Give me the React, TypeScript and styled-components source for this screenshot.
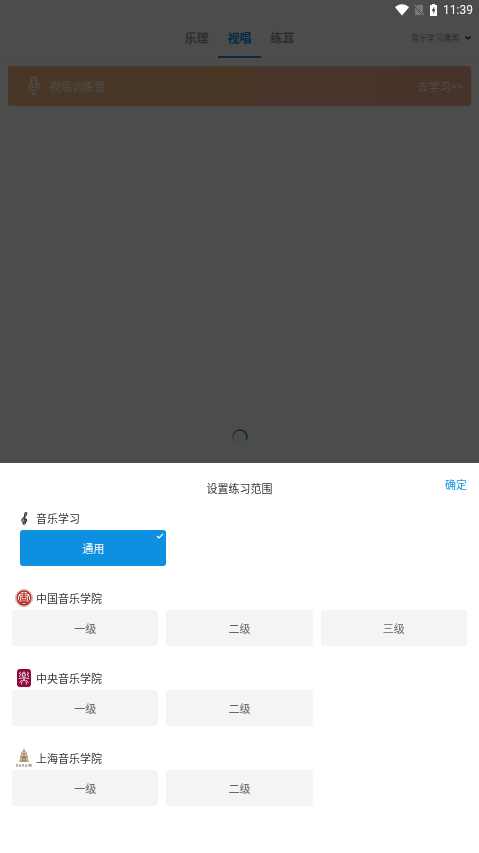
import React, { useState } from "react";
import styled, { createGlobalStyle } from "styled-components";

const GlobalStyle = createGlobalStyle`
  * { box-sizing: border-box; }
  body {
    margin: 0;
    background: #fff;
    font-family: "Noto Sans CJK SC", sans-serif;
    font-size: 11px;
    line-height: 18px;
  }
  button { font: inherit; border: 0; padding: 0; background: none; cursor: pointer; }
  h1, h2 { margin: 0; font: inherit; }
`;

const Page = styled.div`
  position: relative;
  min-height: 100vh;
`;

const TopBar = styled.header`
  display: grid;
  grid-template-columns: 1fr auto 1fr;
  height: 58px;
  padding-top: 20px;
  border-bottom: 1px solid #f2f2f2;
`;

const Tabs = styled.nav`
  grid-column: 2;
  display: flex;
`;

const Tab = styled.button<{ $active?: boolean }>`
  width: 43px;
  height: 38px;
  border-bottom: 2px solid ${(p) => (p.$active ? "#0d90e0" : "transparent")};
  color: ${(p) => (p.$active ? "#0d90e0" : "#999")};
  font-size: 12px;
  font-weight: 700;
`;

const ScopeButton = styled.button`
  justify-self: end;
  display: flex;
  align-items: center;
  gap: 5px;
  height: 36px;
  padding-right: 7px;
  color: #888;
  font-size: 8px;
`;

const Banner = styled.section`
  display: flex;
  align-items: center;
  height: 40px;
  margin: 8px;
  padding: 0 8px 0 20px;
  border-radius: 3px;
  background: linear-gradient(90deg, #f0b882, #f0b47e 50%, #f0b090 56%, #f0aa8c);
  color: #fff;
`;

const BannerTitle = styled.h2`
  flex: 1;
  margin-left: 10px;
`;

const BannerLink = styled.a`
  color: inherit;
  text-decoration: none;
`;

const Loading = styled.div`
  position: absolute;
  inset: 20px 0 0;
  display: flex;
  align-items: center;
  justify-content: center;
`;

const Overlay = styled.div`
  position: fixed;
  inset: 0;
  display: flex;
  flex-direction: column;
  justify-content: space-between;
  background: rgba(0, 0, 0, 0.7);
`;

const StatusBar = styled.div`
  display: flex;
  align-items: center;
  justify-content: flex-end;
  height: 20px;
  padding-right: 6px;
  color: #fff;
  font-family: Roboto, sans-serif;
  font-size: 12px;
`;

const StatusIcon = styled.svg`
  margin-right: 5px;
`;

const Sheet = styled.section`
  padding-bottom: 47px;
  background: #fff;
`;

const SheetHeader = styled.div`
  display: grid;
  grid-template-columns: 1fr auto 1fr;
  height: 43px;
  padding: 0 12px;
`;

const SheetTitle = styled.h1`
  grid-column: 2;
  padding-top: 16px;
  color: #333;
`;

const Confirm = styled.button`
  justify-self: end;
  align-self: start;
  padding-top: 12px;
  color: #1296e0;
`;

const Group = styled.section<{ $indent?: boolean }>`
  padding: ${(p) => (p.$indent ? "0 4px 0 20px" : "0 12px")};
  & + & { margin-top: 20px; }
`;

const GroupTitle = styled.h2<{ $indent?: boolean }>`
  display: flex;
  align-items: center;
  gap: 3px;
  height: 24px;
  margin-left: ${(p) => (p.$indent ? "-5px" : "3px")};
  color: #333;
`;

const Options = styled.div`
  display: grid;
  grid-template-columns: repeat(3, 1fr);
  gap: 8px;
`;

const Option = styled.button<{ $selected: boolean }>`
  position: relative;
  height: 36px;
  border-radius: 3px;
  background: ${(p) => (p.$selected ? "#0d90e0" : "#f4f4f4")};
  color: ${(p) => (p.$selected ? "#fff" : "#666")};
`;

const Check = styled.svg`
  position: absolute;
  top: 2px;
  right: 2px;
`;

const ClefIcon = () => (
  <svg width="18" height="18" viewBox="0 0 18 18" fill="none" stroke="#333" strokeLinecap="round">
    <path d="M10.3 14.2 9.6 6.2C9.4 3.2 12.2 2.6 11.7 5 11.3 7.4 7 8.6 6.8 11.2c-.1 2.5 4.8 2.6 4.8.2 0-2.2-3-1.9-2.8-.2" strokeWidth="1.2" />
    <path d="M10.3 14.2c0 1.4-1.5 1.5-2 .9" strokeWidth="1" />
    <circle cx="8.3" cy="14.3" r="1" fill="#333" stroke="none" />
  </svg>
);

const ChinaSeal = () => (
  <svg width="18" height="18" viewBox="0 0 18 18" fill="none" stroke="#b12a22">
    <circle cx="9" cy="9" r="8.5" stroke="#c9887f" strokeWidth=".7" />
    <circle cx="9" cy="9" r="6.9" strokeWidth="1.5" />
    <g strokeWidth="1">
      <path d="M5 4.8h8M5.2 6.7h7.6M6.3 8.4h5.4v2.4H6.3ZM9 3v8M4.5 7v4.5M13.5 7v4.5M3.2 12h11.6" />
      <path d="M5.2 14.2c2-1 5.6-1 7.6 0" strokeWidth="2" />
    </g>
  </svg>
);

const CentralLogo = () => (
  <svg width="18" height="18" viewBox="0 0 18 18" fill="none">
    <rect x="2" width="14" height="18" rx="3" fill="#8f0a3c" />
    <g stroke="#f6dce6" strokeWidth="1" strokeLinecap="round" strokeLinejoin="round">
      <path d="M7.8 4h2.4v3.2H7.8ZM9 2.8V4M5.4 3.2 4.5 5l1.3.5-1.2 2.2M12.6 3.2l.9 1.8-1.3.5 1.2 2.2M4.2 9.5c2.4-.8 7.2-.8 9.6 0M9 9v2.2M9 11c-1.7 0-2.3 1.6-2.4 4M9 11c1.7 0 2.3 1.6 2.4 4M6.6 11.5l-2 2M11.4 11.5l2 2" />
    </g>
  </svg>
);

const ShanghaiLogo = () => (
  <svg width="18" height="20" viewBox="0 0 18 20" fill="none">
    <path d="M9 0 7.8 3 6 4.5v2L5 8v3l-1 3h10l-1-3V8l-1-1.5v-2L10.2 3Z" fill="#bba586" />
    <path d="M7 4.8h4M6.5 7h5M5.5 11.5h7" stroke="#eee3d3" strokeWidth=".7" />
    <path d="M7.8 13.5v-2.8c0-1.6 2.4-1.6 2.4 0v2.8M7.7 8.7h2.6M8 5.8h2" stroke="#7a6348" strokeWidth=".9" />
    <path d="M1 17h2.2M2 16v3M4 18h2M5 16v3M7 17h2M8 16v3M10 18h2M11 16v3M13 17h3.5M14 16v3M16 16v3" stroke="#777069" strokeWidth=".7" />
  </svg>
);

const groups = [
  { name: "音乐学习", Icon: ClefIcon, levels: ["通用"], indent: true },
  { name: "中国音乐学院", Icon: ChinaSeal, levels: ["一级", "二级", "三级"] },
  { name: "中央音乐学院", Icon: CentralLogo, levels: ["一级", "二级"] },
  { name: "上海音乐学院", Icon: ShanghaiLogo, levels: ["一级", "二级"] },
];

export default function App() {
  const [selected, setSelected] = useState("音乐学习-通用");
  return (
    <Page>
      <GlobalStyle />
      <TopBar>
        <Tabs>
          <Tab>乐理</Tab>
          <Tab $active>视唱</Tab>
          <Tab>练耳</Tab>
        </Tabs>
        <ScopeButton>
          音乐学习通用
          <svg width="8" height="6" viewBox="0 0 8 6" fill="none" stroke="#222" strokeWidth="1.2">
            <path d="m1.5 1.5 2.5 2.5 2.5-2.5" />
          </svg>
        </ScopeButton>
      </TopBar>
      <Banner>
        <svg width="12" height="20" viewBox="0 0 12 20" fill="none" stroke="#fff">
          <rect x="3" y="1" width="6" height="11" rx="3" fill="#fff" fillOpacity=".3" />
          <path d="M1 7v3c0 6 10 6 10 0V7M6 15v4M3.5 18.5h5M3 5h2M7 5h2M3 8h2M7 8h2" strokeWidth="1.2" />
        </svg>
        <BannerTitle>视唱训练营</BannerTitle>
        <BannerLink href="#study">去学习&gt;&gt;</BannerLink>
      </Banner>
      <Loading role="status" aria-label="加载中">
        <svg width="16" height="16" viewBox="0 0 16 16" fill="none" stroke="#0d90e0" strokeWidth="1.6">
          <path d="M3 13A7 7 0 0 1 1 8" opacity=".3" />
          <path d="M1 8a7 7 0 0 1 4-6.3" opacity=".6" />
          <path d="M5 1.7A7 7 0 0 1 14.2 11" />
        </svg>
      </Loading>
      <Overlay>
        <StatusBar>
          <StatusIcon width="14" height="12" viewBox="0 0 14 12">
            <path d="M0 3.2C4-.7 10-.7 14 3.2L7 11.5Z" fill="#fff" />
          </StatusIcon>
          <StatusIcon width="10" height="12" viewBox="0 0 10 12" fill="none">
            <path d="M3.5 1H9v10H1V4Z" fill="#777" />
            <path d="m0 1 10 10.5" stroke="#4c4c4c" strokeWidth="2" />
            <path d="m0 .5 10 10.5" stroke="#929292" />
          </StatusIcon>
          <StatusIcon width="9" height="12" viewBox="0 0 9 12">
            <path d="M3 0h3v1h2v11H1V1h2Z" fill="#fff" />
            <path d="M5.3 2.5 2.5 7h1.7v3L6.6 5.6H5.3Z" fill="#4c4c4c" />
          </StatusIcon>
          <time>11:39</time>
        </StatusBar>
        <Sheet role="dialog" aria-labelledby="scope-title">
          <SheetHeader>
            <SheetTitle id="scope-title">设置练习范围</SheetTitle>
            <Confirm>确定</Confirm>
          </SheetHeader>
          {groups.map(({ name, Icon, levels, indent }) => (
            <Group key={name} $indent={indent}>
              <GroupTitle $indent={indent}>
                <Icon />
                {name}
              </GroupTitle>
              <Options>
                {levels.map((level) => {
                  const id = `${name}-${level}`;
                  const active = id === selected;
                  return (
                    <Option key={id} $selected={active} aria-pressed={active} onClick={() => setSelected(id)}>
                      {level}
                      {active && (
                        <Check width="8" height="8" viewBox="0 0 8 8" fill="none" stroke="#fff" strokeWidth="1.2">
                          <path d="m1 4 2 2 4-4.2" />
                        </Check>
                      )}
                    </Option>
                  );
                })}
              </Options>
            </Group>
          ))}
        </Sheet>
      </Overlay>
    </Page>
  );
}
